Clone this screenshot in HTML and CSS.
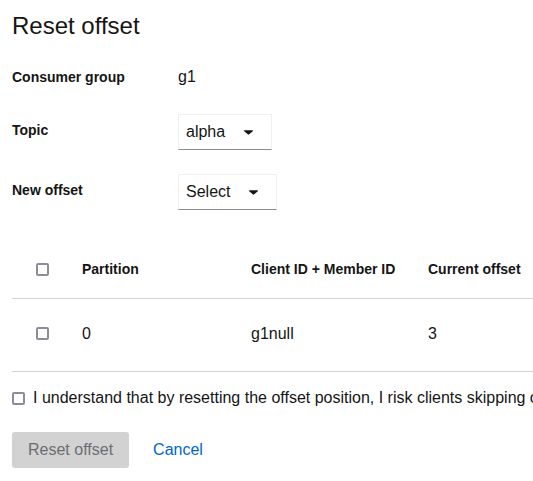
FILE: index.html
```html
<!DOCTYPE html>
<html lang="en">
<head>
<meta charset="utf-8">
<title>Reset offset</title>
<link rel="stylesheet" href="styles.css">
</head>
<body>
<div class="page">
  <h1 class="title">Reset offset</h1>

  <div class="form">
    <div class="row row-static">
      <div class="label">Consumer group</div>
      <div class="value">g1</div>
    </div>
    <div class="row">
      <div class="label label-input">Topic</div>
      <button class="select" type="button">
        <span class="select-text">alpha</span>
        <svg class="caret" viewBox="0 0 9 5" width="9" height="5" aria-hidden="true"><path d="M0.6 0.2h7.8c0.5 0 0.8 0.6 0.4 1L4.9 4.6c-0.2 0.2-0.6 0.2-0.8 0L0.2 1.2C-0.2 0.8 0.1 0.2 0.6 0.2z"/></svg>
      </button>
    </div>
    <div class="row">
      <div class="label label-input">New offset</div>
      <button class="select" type="button">
        <span class="select-text">Select</span>
        <svg class="caret" viewBox="0 0 9 5" width="9" height="5" aria-hidden="true"><path d="M0.6 0.2h7.8c0.5 0 0.8 0.6 0.4 1L4.9 4.6c-0.2 0.2-0.6 0.2-0.8 0L0.2 1.2C-0.2 0.8 0.1 0.2 0.6 0.2z"/></svg>
      </button>
    </div>
  </div>

  <div class="table">
    <div class="tr thead">
      <div class="cell c-check"><input type="checkbox" class="cb" aria-label="Select all"></div>
      <div class="cell c-part">Partition</div>
      <div class="cell c-client">Client ID + Member ID</div>
      <div class="cell c-offset">Current offset</div>
    </div>
    <div class="tr tbody">
      <div class="cell c-check"><input type="checkbox" class="cb" aria-label="Select row 0"></div>
      <div class="cell c-part">0</div>
      <div class="cell c-client">g1null</div>
      <div class="cell c-offset">3</div>
    </div>
  </div>

  <label class="confirm">
    <input type="checkbox" class="cb">
    <span>I understand that by resetting the offset position, I risk clients skipping or reprocessing messages.</span>
  </label>

  <div class="actions">
    <button class="btn btn-primary" type="button" disabled>Reset offset</button>
    <button class="btn btn-link" type="button">Cancel</button>
  </div>
</div>
</body>
</html>
```

FILE: styles.css
```css
html, body {
  margin: 0;
  padding: 0;
  overflow: hidden;
  background: #fff;
}

body {
  font-family: "Liberation Sans", Arial, sans-serif;
  color: #151515;
}

.page {
  padding: 12px 0 0 12px;
}

.title {
  margin: 0 0 27px;
  font-size: 24px;
  font-weight: 400;
  line-height: normal;
  color: #151515;
}

.form {
  display: flex;
  flex-direction: column;
  gap: 24px;
}

.row {
  display: flex;
  align-items: flex-start;
}

.row-static {
  padding-bottom: 3px;
}

.label {
  width: 166px;
  flex: none;
  font-size: 14px;
  font-weight: 700;
  line-height: 20px;
}

.label-input {
  padding-top: 6px;
}

.value {
  font-size: 16px;
  line-height: 20px;
}

.select {
  display: flex;
  align-items: center;
  height: 36px;
  margin: 0;
  padding: 0 18px 0 7px;
  background: #fff;
  border: 1px solid;
  border-color: #f0f0f0 #f0f0f0 #8a8d90;
  border-radius: 0;
  font-family: inherit;
  font-size: 16px;
  color: #151515;
  cursor: pointer;
}

.caret {
  margin-left: 19px;
  fill: #151515;
}

.table {
  width: 720px;
  margin-top: 30px;
}

.tr {
  display: flex;
  align-items: center;
  border-bottom: 1px solid #d2d2d2;
}

.thead {
  height: 58px;
  font-size: 14px;
  font-weight: 700;
}

.tbody {
  height: 73px;
  padding-bottom: 3px;
  box-sizing: border-box;
  font-size: 16px;
}

.cell {
  flex: none;
}

.c-check {
  width: 70px;
  padding-left: 24px;
  box-sizing: border-box;
  display: flex;
  align-items: center;
}

.c-part {
  width: 169px;
}

.c-client {
  width: 177px;
}

.c-offset {
  width: 200px;
}

.cb {
  appearance: none;
  -webkit-appearance: none;
  box-sizing: border-box;
  width: 13px;
  height: 13px;
  margin: 0;
  flex: none;
  background: #fff;
  border: 2px solid #8e8c9a;
  border-radius: 2px;
}

.confirm {
  display: flex;
  align-items: center;
  gap: 8px;
  margin-top: 14px;
  font-size: 16px;
  line-height: 24px;
  white-space: nowrap;
}

.actions {
  display: flex;
  gap: 8px;
  margin-top: 22px;
}

.btn {
  height: 36px;
  padding: 0 16px;
  border: 0;
  border-radius: 3px;
  font-family: inherit;
  font-size: 16px;
  line-height: 24px;
  background: transparent;
}

.btn-primary {
  background: #d2d2d2;
  color: #6a6e73;
}

.btn-link {
  color: #0066cc;
  cursor: pointer;
}
```
